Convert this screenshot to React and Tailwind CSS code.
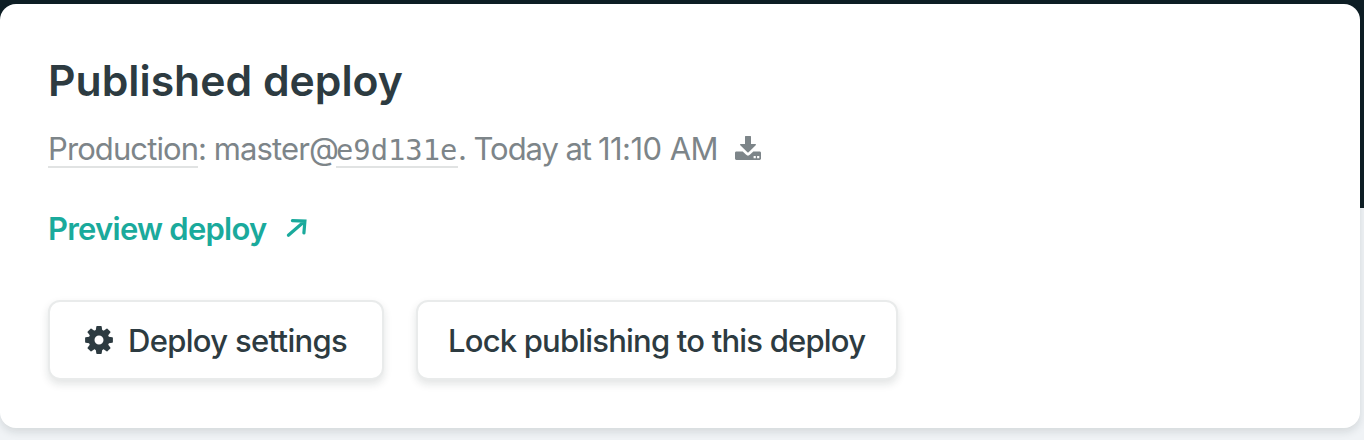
function DownloadIcon() {
  return (
    <svg className="ml-[15px] h-[26px] w-[26px] shrink-0" viewBox="0 0 26 26" fill="#7d8589" aria-hidden="true">
      <path d="M10.600 0h4.800a.6.600 0 0 1 .6.600V8h4.200c.7 0 1 .7.5 1.200L13.600 16.200a.9.900 0 0 1-1.200 0L5.300 9.200C4.800 8.700 5.100 8 5.800 8H10V.6a.6.600 0 0 1 .6-.6Z" />
      <path
        fillRule="evenodd"
        d="M1.400 15.500h6.300l3.200 3.100a3 3 0 0 0 4.200 0l3.200-3.100h6.300c.8 0 1.400.6 1.400 1.400v5.700c0 .8-.6 1.400-1.400 1.400H1.400C.6 24 0 23.400 0 22.600v-5.700C0 16.100.6 15.500 1.400 15.500Zm17.200 4.500v2.300h2.200v-2.300h-2.200Zm3.500 0v2.300h2.200v-2.300h-2.200Z"
      />
    </svg>
  );
}

function ArrowIcon() {
  return (
    <svg className="ml-[21px] h-[20px] w-[22px] shrink-0 -translate-x-px -translate-y-px" viewBox="0 0 22 20" fill="none" stroke="#1aaa9c" strokeWidth="3.200" strokeLinecap="round" strokeLinejoin="miter" aria-hidden="true">
      <path d="M2.400 17.200 18 3.700M6.400 2.600 18.900 3.100 17.900 15" />
    </svg>
  );
}

function GearIcon() {
  const teeth = [0, 45, 90, 135, 180, 225, 270, 315];
  return (
    <svg className="h-7 w-7 shrink-0" viewBox="-14 -14 28 28" fill="#2d3b41" aria-hidden="true">
      {teeth.map((angle) => (
        <path key={angle} transform={`rotate(${angle})`} d="M-3.500-8 -2.700-13.300Q-2.600-13.900-2-13.900H2Q2.600-13.900 2.700-13.300L3.500-8Z" />
      ))}
      <path fillRule="evenodd" d="M0-10.400a10.400 10.400 0 1 0 0 20.800a10.400 10.400 0 1 0 0-20.800Zm0 5.900a4.500 4.500 0 1 1 0 9a4.500 4.500 0 1 1 0-9Z" />
    </svg>
  );
}

function Button({ className, children }) {
  return (
    <button
      type="button"
      className={`flex h-20 items-center rounded-xl border-2 border-[#e9ebeb] bg-white text-[31px] font-medium leading-10 whitespace-nowrap text-[#2d3b41] shadow-[0_4px_8px_rgba(14,30,37,0.12)] ${className}`}
    >
      {children}
    </button>
  );
}

export default function App() {
  return (
    <div className="h-[440px] w-full overflow-hidden bg-[linear-gradient(#0e1e25_208px,#f0f3f6_208px)] pt-1 font-['Inter','Liberation_Sans',sans-serif]">
      <section className="flex h-[424px] w-[1360px] flex-col items-start rounded-2xl bg-white px-12 shadow-[0_4px_8px_rgba(14,30,37,0.12)]">
        <h1 className="mt-[50px] text-[42.700px] leading-[54px] font-semibold whitespace-nowrap text-[#2d3b41]">Published deploy</h1>
        <div className="mt-[22px] flex h-[38px] items-center text-[31px] leading-[38px] whitespace-pre text-[#7d8589]">
          <span className="h-[38px] w-[150px] shrink-0 border-b-2 border-[#e1e3e3] tracking-[-0.900px]">Production</span>
          <span className="w-[138px] tracking-[-0.900px]">: master@</span>
          <span className="h-[38px] w-[122px] border-b-2 border-[#e1e3e3] font-['DejaVu_Sans_Mono',monospace] text-[28.800px] leading-10">e9d131e</span>
          <span className="w-[140px] tracking-[-1.050px]">. Today at </span>
          <span className="w-[122px] tracking-[-0.550px]">11:10 AM</span>
          <DownloadIcon />
        </div>
        <a href="#preview" className="mt-[41px] flex h-10 items-center text-[31px] leading-10 font-semibold tracking-[-0.760px] whitespace-nowrap text-[#1aaa9c]">
          Preview deploy
          <ArrowIcon />
        </a>
        <div className="mt-[51px] flex gap-8">
          <Button className="w-[336px] gap-[15px] pl-[35px] tracking-[-0.680px]">
            <GearIcon />
            <span className="pt-0.5">Deploy settings</span>
          </Button>
          <Button className="w-[482px] pl-[30px] tracking-[-0.800px]">
            <span className="pt-0.5">Lock publishing to this deploy</span>
          </Button>
        </div>
      </section>
    </div>
  );
}
